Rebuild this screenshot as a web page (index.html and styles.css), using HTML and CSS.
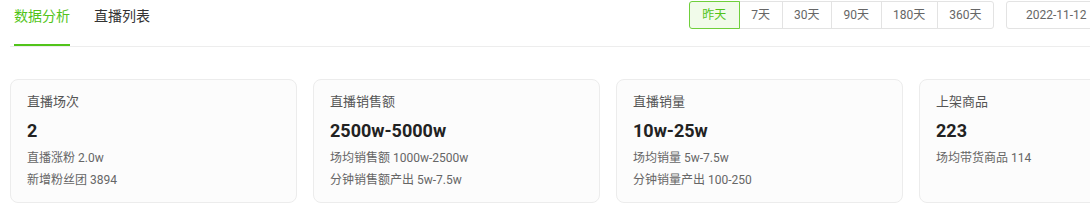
FILE: index.html
```html
<!DOCTYPE html>
<html lang="zh">
<head>
<meta charset="utf-8">
<link rel="stylesheet" href="styles.css">
</head>
<body>
<div class="page">
  <div class="header">
    <div class="tabs">
      <div class="tab active">数据分析</div>
      <div class="tab">直播列表</div>
    </div>
    <div class="tools">
      <div class="range">
        <div class="rbtn on">昨天</div>
        <div class="rbtn">7天</div>
        <div class="rbtn">30天</div>
        <div class="rbtn">90天</div>
        <div class="rbtn">180天</div>
        <div class="rbtn">360天</div>
      </div>
      <div class="date">2022-11-12</div>
    </div>
  </div>
  <div class="cards">
    <div class="card">
      <div class="ctitle">直播场次</div>
      <div class="cval">2</div>
      <div class="csub">直播涨粉 2.0w</div>
      <div class="csub">新增粉丝团 3894</div>
    </div>
    <div class="card">
      <div class="ctitle">直播销售额</div>
      <div class="cval">2500w-5000w</div>
      <div class="csub">场均销售额 1000w-2500w</div>
      <div class="csub">分钟销售额产出 5w-7.5w</div>
    </div>
    <div class="card">
      <div class="ctitle">直播销量</div>
      <div class="cval">10w-25w</div>
      <div class="csub">场均销量 5w-7.5w</div>
      <div class="csub">分钟销量产出 100-250</div>
    </div>
    <div class="card">
      <div class="ctitle">上架商品</div>
      <div class="cval">223</div>
      <div class="csub">场均带货商品 114</div>
    </div>
  </div>
</div>
</body>
</html>
```
FILE: styles.css
```css
html, body {
  margin: 0;
  padding: 0;
  background: #fff;
  overflow: hidden;
}
body {
  font-family: Roboto, "Noto Sans CJK SC", sans-serif;
  color: #333;
}
.page {
  width: 1196px;
  margin-left: 10px;
}
.header {
  display: flex;
  align-items: flex-start;
  border-bottom: 1px solid #ededed;
}
.tabs {
  display: flex;
  gap: 24px;
  padding-left: 4px;
}
.tab {
  font-size: 14px;
  line-height: 22px;
  padding: 5px 0 17px;
  border-bottom: 2px solid transparent;
  color: #333;
}
.tab.active {
  color: #52c41a;
  border-bottom-color: #52c41a;
}
.tools {
  margin-left: auto;
  margin-top: 1px;
  display: flex;
  gap: 12px;
}
.range {
  display: flex;
}
.rbtn {
  height: 26px;
  line-height: 26px;
  padding: 0 11.5px;
  font-size: 12px;
  color: #666;
  border: 1px solid #e3e3e3;
  margin-left: -1px;
  background: #fff;
}
.rbtn:first-child {
  margin-left: 0;
  border-radius: 3px 0 0 3px;
}
.rbtn:last-child {
  border-radius: 0 3px 3px 0;
}
.rbtn.on {
  color: #52c41a;
  background: #f1fbea;
  border-color: #6fcf3b;
  position: relative;
  z-index: 1;
  padding: 0 12.5px;
}
.date {
  width: 179px;
  height: 26px;
  line-height: 26px;
  padding-left: 19px;
  border: 1px solid #e3e3e3;
  border-radius: 3px;
  font-size: 12px;
  color: #666;
}
.cards {
  display: grid;
  grid-template-columns: repeat(4, 1fr);
  gap: 16px;
  margin-top: 32px;
}
.card {
  height: 124px;
  box-sizing: border-box;
  border: 1px solid #ececec;
  border-radius: 8px;
  background: #fcfcfc;
  padding: 11px 16px 0;
}
.ctitle {
  font-size: 13px;
  line-height: 22px;
  color: #555;
}
.cval {
  font-size: 18px;
  font-weight: 700;
  line-height: 26px;
  margin-top: 5px;
  margin-bottom: 3px;
  color: #222;
}
.csub {
  font-size: 12px;
  line-height: 22px;
  color: #666;
}
```
